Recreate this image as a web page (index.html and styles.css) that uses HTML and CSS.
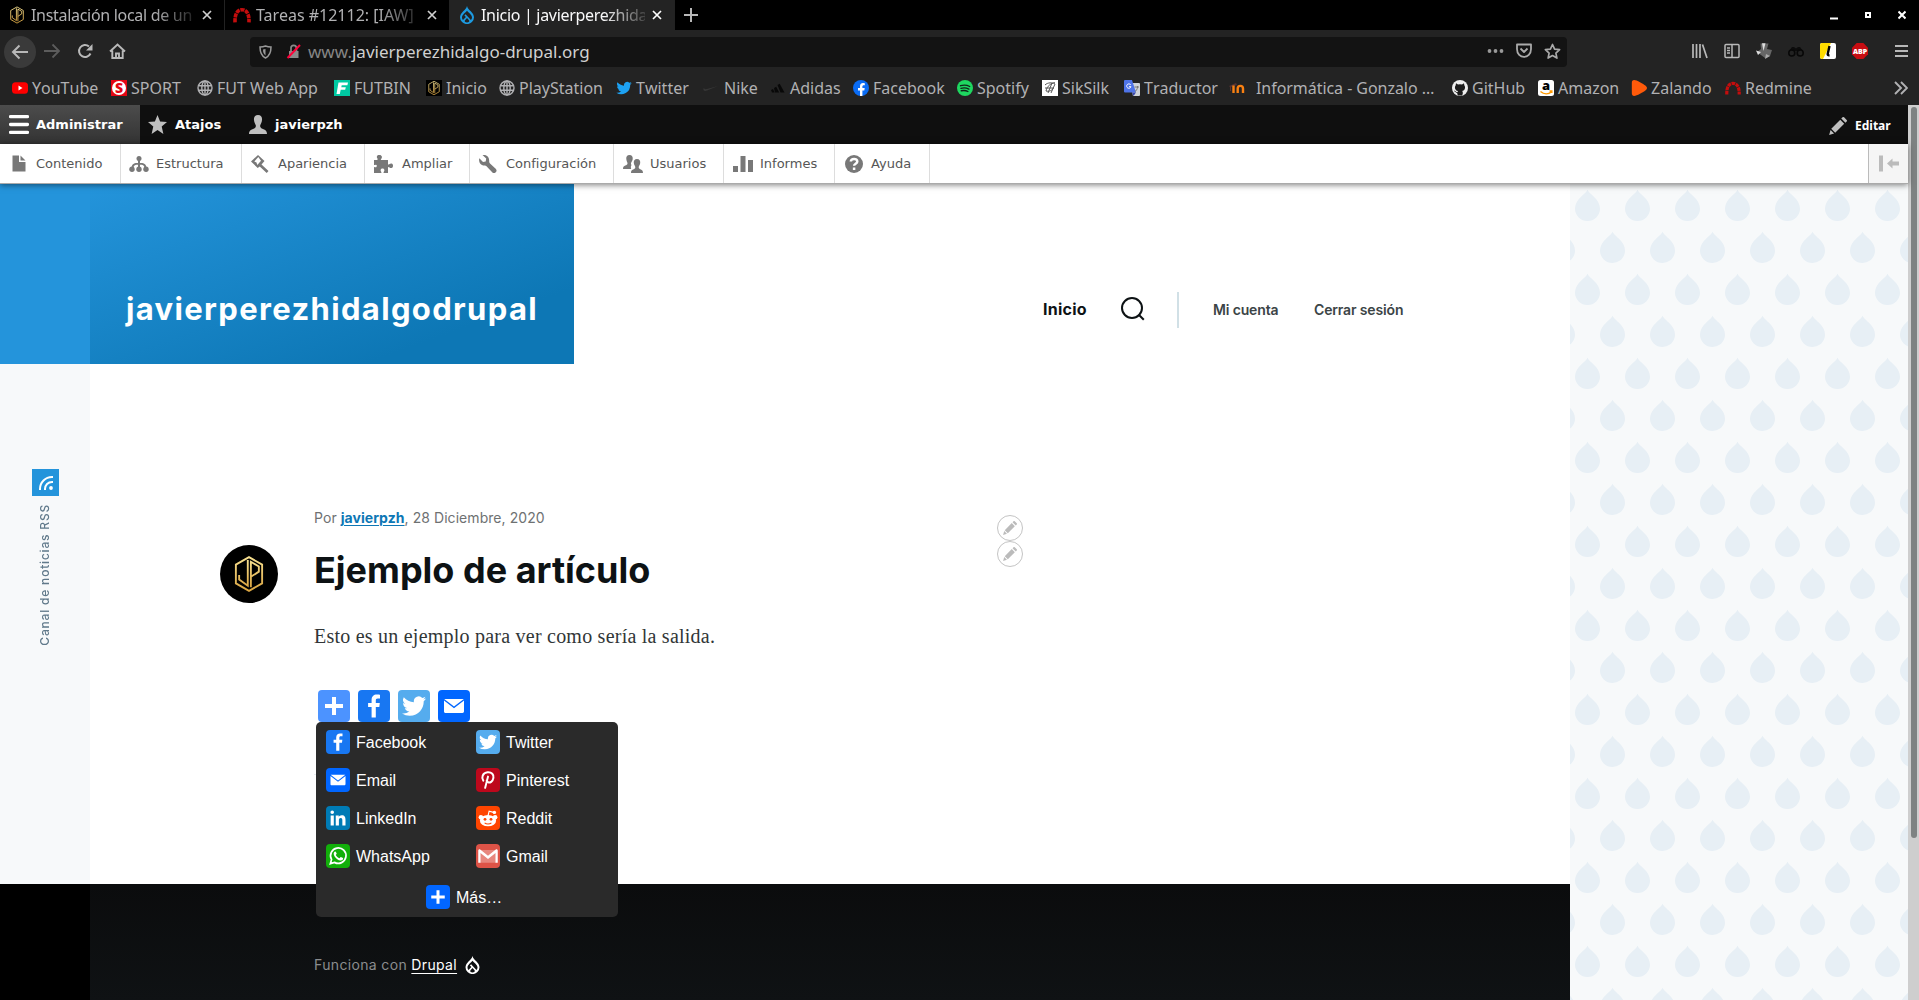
FILE: index.html
```html
<!DOCTYPE html>
<html lang="es">
<head>
<meta charset="utf-8">
<title>Inicio | javierperezhidalgodrupal</title>
<link rel="stylesheet" href="styles.css">
</head>
<body>
<svg class="defs" aria-hidden="true">
  <defs>
    <linearGradient id="gold" x1="0" y1="0" x2="0" y2="1"><stop offset="0" stop-color="#f8e190"/><stop offset="1" stop-color="#d9a441"/></linearGradient>
    <pattern id="drops" width="50" height="84" patternUnits="userSpaceOnUse">
      <g fill="#e7eff5">
        <path d="M17.500 5.500c1 4.500 12.500 9 12.500 19.300a12.500 12.200 0 0 1-25 0c0-10.300 11.500-14.800 12.500-19.300z"/>
        <path d="M42.500 47.500c1 4.500 12.500 9 12.500 19.300a12.500 12.200 0 0 1-25 0c0-10.300 11.500-14.800 12.500-19.300z"/>
        <path d="M-7.500 47.500c1 4.500 12.500 9 12.500 19.300a12.500 12.200 0 0 1-25 0c0-10.300 11.500-14.800 12.500-19.300z"/>
      </g>
    </pattern>
  </defs>
  <symbol id="jp" viewBox="0 0 32 40"><g fill="none" stroke="url(#gold)" stroke-width="2"><path d="M16 2l14 8v20l-14 8-14-8V10z"/><path d="M14.700 5v27.500L5.500 26v-5M18 34V7l8.500 5v5.500L18 23"/></g></symbol>
  <symbol id="redmine" viewBox="0 0 16 16"><path d="M1.800 14.500C1.500 7 4 3.300 8 3.300S14.500 7 14.200 14.500" fill="none" stroke="#c40d0d" stroke-width="3.200" stroke-dasharray="3.600 .7"/></symbol>
  <symbol id="drop" viewBox="0 0 14 18"><path fill="currentColor" fill-rule="evenodd" d="M7 0c.6 2.800 2.300 3.700 3.800 5.200C12.500 7 14 8.900 14 11.300A7 6.800 0 0 1 0 11.300C0 8.900 1.500 7 3.200 5.200 4.700 3.700 6.400 2.800 7 0zM7 4.700C5.500 6.700 2 8.700 2 11.400c0 1 .4 1.900 1 2.600l2.900-3.100-1.500-1.500 1.200-1.200L10.900 14c.7-.7 1.100-1.600 1.100-2.600 0-2.700-3.500-4.700-5-6.700zM7 12l-2 2.200c-.8 1 0 2.300 2 2.300s2.800-1.300 2-2.300z"/></symbol>
  <symbol id="globe" viewBox="0 0 16 16"><g fill="none" stroke="#b1b1b3" stroke-width="1.400"><circle cx="8" cy="8" r="7"/><ellipse cx="8" cy="8" rx="3.200" ry="7"/><path d="M8 1v14M1.500 5.700h13M1.500 10.300h13"/></g></symbol>
  <symbol id="close" viewBox="0 0 10 10"><path d="M1 1l8 8M9 1l-8 8" stroke="currentColor" stroke-width="1.700" fill="none"/></symbol>
  <symbol id="bird" viewBox="0 0 24 24"><path fill="currentColor" d="M23.600 4.900c-.8.400-1.700.6-2.700.8 1-.6 1.700-1.500 2.100-2.600-.9.500-1.900.9-3 1.100a4.800 4.800 0 0 0-8.100 4.300C8 8.300 4.500 6.400 2.100 3.500c-1.300 2.200-.6 5 1.500 6.300-.8 0-1.500-.2-2.100-.6 0 2.300 1.600 4.200 3.800 4.700-.7.200-1.400.2-2.100.1.600 1.900 2.400 3.200 4.400 3.300A9.500 9.500 0 0 1 .5 19.200a13.500 13.500 0 0 0 20.800-12c.9-.6 1.700-1.400 2.300-2.300z"/></symbol>
  <symbol id="pencil" viewBox="0 0 16 16"><path fill="currentColor" d="M10.900 1.400L12 .3a1 1 0 0 1 1.400 0l2.300 2.300a1 1 0 0 1 0 1.400l-1.100 1.100zM10 2.400L2 10.500 5.500 14l8-8zM1.400 11.500L.1 15.900l4.400-1.300z"/></symbol>
  <symbol id="s-plus" viewBox="0 0 32 32"><path fill="#fff" d="M14 7h4v18h-4zM7 14h18v4H7z"/></symbol>
  <symbol id="s-facebook" viewBox="0 0 32 32"><path fill="#fff" d="M17.800 27.500V17h3.500l.5-4h-4v-2.600c0-1.200.4-2 2-2h2.200V4.800c-.4-.1-1.700-.2-3.200-.2-3.100 0-5.200 1.900-5.200 5.400v3h-3.500v4h3.500v10.500z"/></symbol>
  <symbol id="s-twitter" viewBox="0 0 32 32"><path fill="#fff" d="M28 8.600a9.900 9.900 0 0 1-2.800.8 4.900 4.900 0 0 0 2.200-2.700c-1 .5-2 1-3.100 1.200a4.900 4.900 0 0 0-8.500 3.300c0 .4 0 .8.200 1.100-4.100-.2-7.700-2.200-10.200-5.100a4.900 4.900 0 0 0 1.500 6.500c-.8 0-1.500-.2-2.200-.6v.1c0 2.400 1.700 4.400 3.900 4.800a4.900 4.900 0 0 1-2.200.1 4.900 4.900 0 0 0 4.600 3.400A9.900 9.900 0 0 1 4 23.500 14 14 0 0 0 11.700 25.800c9.100 0 14-7.500 14-14v-.6A10 10 0 0 0 28 8.600z"/></symbol>
  <symbol id="s-email" viewBox="0 0 32 32"><path fill="#fff" d="M26 21.300V10.500l-10 7.700-10-7.700v11c0 .9.700 1.500 1.500 1.500h17c.9 0 1.500-.7 1.500-1.700z"/><path fill="#fff" d="M6.200 9h19.600L16 16.500z"/></symbol>
  <symbol id="s-pinterest" viewBox="0 0 32 32"><path fill="none" stroke="#fff" stroke-width="2.700" stroke-linecap="round" d="M9.700 16.800C7 13 8.500 6.500 15.500 5.800c5.500-.4 8.500 3 7.700 7.400-.8 5-4.700 7.200-7.200 5.700-1-.6-1.500-1.400-1.700-2.200M16 11.500l-3.800 15"/></symbol>
  <symbol id="s-linkedin" viewBox="0 0 32 32"><path fill="#fff" d="M6.200 12.600h4.200v13.500H6.200zM8.300 6a2.400 2.400 0 1 1 0 4.800 2.400 2.400 0 0 1 0-4.800M13 12.600h4v1.900c.6-1.100 2-2.200 4-2.200 4.200 0 5 2.800 5 6.400v7.400h-4.200v-6.500c0-1.600 0-3.600-2.100-3.600-2.200 0-2.500 1.700-2.500 3.400v6.700H13z"/></symbol>
  <symbol id="s-reddit" viewBox="0 0 32 32"><path fill="none" stroke="#fff" stroke-width="1.500" d="M16 13l1.500-6 6 1.500"/><g fill="#fff"><circle cx="24.500" cy="8.500" r="2.300"/><circle cx="6.500" cy="15" r="3"/><circle cx="25.500" cy="15" r="3"/><ellipse cx="16" cy="19.500" rx="10.800" ry="7.600"/></g><g fill="#ff4500"><circle cx="12" cy="17.800" r="1.900"/><circle cx="20" cy="17.800" r="1.900"/></g><path fill="none" stroke="#ff4500" stroke-width="1.400" d="M11.500 22.500c2.300 2 6.700 2 9 0"/></symbol>
  <symbol id="s-whatsapp" viewBox="0 0 32 32"><path fill="none" stroke="#fff" stroke-width="2.300" d="M5.800 26.200l1.600-5.600a10.300 10.300 0 1 1 3.900 3.900z"/><path fill="#fff" d="M12.500 10c-.5-.1-1 .1-1.500.8-1.200 1.500-1 3.500.5 5.700 2 3.200 4.700 5 8 5.600 1.500.2 3.300-1 3.400-3 0-.4-2.700-1.900-3.300-1.800-.6.100-1.200 1.800-1.700 1.700-1.800-.5-4-2.400-4.800-4.200.1-.5 1.200-1.300 1.100-2-.1-.5-1.200-2.800-1.700-2.800z"/></symbol>
  <symbol id="s-gmail" viewBox="0 0 32 32"><path fill="#fff" opacity=".3" d="M5 8h22v17H5z"/><path fill="#fff" d="M3 8.500C3 7.500 4 7 5.200 7L16 15.500 26.800 7C28 7 29 7.500 29 8.500V25h-3V12l-10 8L6 12v13H3z"/></symbol>
</svg>

<header class="browser">
  <div class="tabs">
    <div class="tab"><svg class="fav"><use href="#jp"/></svg><span class="tab-title">Instalación local de un</span><svg class="x"><use href="#close"/></svg></div>
    <div class="tab"><svg class="fav"><use href="#redmine"/></svg><span class="tab-title">Tareas #12112: [IAW]</span><svg class="x"><use href="#close"/></svg></div>
    <div class="tab active"><svg class="fav blue"><use href="#drop"/></svg><span class="tab-title">Inicio | javierperezhida</span><svg class="x"><use href="#close"/></svg></div>
    <svg class="plus" viewBox="0 0 16 16"><path d="M8 1v14M1 8h14" stroke="#b8b8b8" stroke-width="2"/></svg>
    <div class="win">
      <svg width="8" height="12"><path d="M0 9.500h8" stroke="#fff" stroke-width="2"/></svg>
      <svg width="8" height="12"><path d="M2 4h4v4H2z" fill="none" stroke="#fff" stroke-width="2"/></svg>
      <svg width="8" height="12"><path d="M.5 2.500l7 7M7.500 2.500l-7 7" stroke="#fff" stroke-width="2"/></svg>
    </div>
  </div>
  <div class="nav">
    <div class="nav-buttons">
      <span class="back"><svg width="18" height="16" viewBox="0 0 18 16"><path d="M17 8H2M8.500 1.500L2 8l6.500 6.500" fill="none" stroke="#b8b8b8" stroke-width="2"/></svg></span>
      <svg width="18" height="16" viewBox="0 0 18 16"><path d="M1 8h15M9.500 1.500L16 8l-6.500 6.500" fill="none" stroke="#5c5c5c" stroke-width="1.800"/></svg>
      <svg width="16" height="16" viewBox="0 0 16 16"><path d="M13.500 10.500A6 6 0 1 1 12 3.500" fill="none" stroke="#b8b8b8" stroke-width="2"/><path d="M15.500 1v6.500H9z" fill="#b8b8b8"/></svg>
      <svg width="17" height="16" viewBox="0 0 17 16"><path d="M1 8.500l7.500-7 7.500 7M3.300 7.500V15h10.400V7.500M7 15v-4.500h3V15" fill="none" stroke="#b8b8b8" stroke-width="1.900"/></svg>
    </div>
    <div class="url">
      <svg width="13" height="14" viewBox="0 0 13 14"><path d="M6.500 1c2 .8 3.500 1 5.500 1 0 6-1.500 9-5.500 11C2.500 11 1 8 1 2c2 0 3.500-.2 5.500-1z" fill="none" stroke="#999" stroke-width="1.500"/><path d="M6.500 4v6.500C4.700 9 4 7.500 4 4.500z" fill="#999"/></svg>
      <svg class="lock" width="15" height="15" viewBox="0 0 15 15"><path d="M3 7h9.500v7H3z" fill="#8a8a8a"/><path d="M5 7V4a2.700 2.700 0 0 1 5.400 0v3" fill="none" stroke="#8a8a8a" stroke-width="1.700"/><path d="M1.500 14L14 1" stroke="#ff0039" stroke-width="2"/></svg>
      <span class="address"><span class="dim">www.</span>javierperezhidalgo-drupal.org</span>
      <svg width="17" height="14" viewBox="0 0 17 14"><g fill="#999"><circle cx="2.500" cy="7" r="1.900"/><circle cx="8.500" cy="7" r="1.900"/><circle cx="14.500" cy="7" r="1.900"/></g></svg>
      <svg width="16" height="15" viewBox="0 0 16 15"><path d="M1 1.500h14V6c0 10.500-14 10.500-14 0zM4.500 5.500L8 9l3.500-3.500" fill="none" stroke="#aaa" stroke-width="1.800" stroke-linejoin="round"/></svg>
      <svg width="17" height="16" viewBox="0 0 17 16"><path d="M8.500 1.500l2.100 4.600 5 .6-3.700 3.400 1 5-4.400-2.500-4.400 2.500 1-5L1.400 6.700l5-.6z" fill="none" stroke="#aaa" stroke-width="1.700" stroke-linejoin="round"/></svg>
    </div>
    <div class="tools">
      <svg viewBox="0 0 16 16"><path d="M1 1v14M4.500 1v14M8 1v14M10.500 1.500l4.500 13.500" stroke="#b8b8b8" stroke-width="1.700"/></svg>
      <svg viewBox="0 0 16 16"><path d="M1 2.500q0-1 1-1h12q1 0 1 1v11q0 1-1 1H2q-1 0-1-1zM8 2v12M3 5h3M3 7.500h3M3 10h3" fill="none" stroke="#b8b8b8" stroke-width="1.500"/></svg>
      <svg viewBox="0 0 16 16"><path d="M5 6L4.500.5h8L11 6l5 1-2 6-5 2-4-3-4-3z" fill="#666"/><path d="M7.500 8L6 .3h3.500zM0 7.500l5 1.500-3 3z" fill="#ddd"/><path d="M9 16l1-5 4 2z" fill="#aaa"/></svg>
      <svg viewBox="0 0 16 16"><path d="M1 8l3-4h2l2 1.500L10 4h2l3 4" fill="#0c0c0c"/><circle cx="3.800" cy="10" r="3" fill="#222" stroke="#080808" stroke-width="1.600"/><circle cx="12.200" cy="10" r="3" fill="#222" stroke="#080808" stroke-width="1.600"/></svg>
      <svg viewBox="0 0 16 16"><rect width="16" height="16" rx="2" fill="#fff"/><path d="M2 0h9L3 16H2q-2 0-2-2V2q0-2 2-2z" fill="#ffdc00"/><path d="M9.500 3L7.700 11q-.3 1.500 1.800 1.200" fill="none" stroke="#000" stroke-width="2.400"/></svg>
      <svg viewBox="0 0 16 16"><path d="M4.700 0h6.600L16 4.700v6.600L11.300 16H4.700L0 11.300V4.700z" fill="#c70d12"/><text class="fav-text white" x="8" y="10.700" font-size="7">ABP</text></svg>
      <svg class="burger" viewBox="0 0 16 16"><path d="M1 3h13M1 8h13M1 13h13" stroke="#b8b8b8" stroke-width="2"/></svg>
    </div>
  </div>
  <nav class="bookmarks">
    <a><svg viewBox="0 0 16 16"><rect y="2.300" width="16" height="11.400" rx="3.500" fill="#f00"/><path d="M6.500 5.500L10.500 8l-4 2.500z" fill="#fff"/></svg>YouTube</a>
    <a><svg viewBox="0 0 16 16"><rect width="16" height="16" fill="#e30613"/><circle cx="8" cy="8" r="7" fill="#fff"/><text x="8" y="13" class="fav-text red" font-size="14">S</text></svg>SPORT</a>
    <a><svg><use href="#globe"/></svg>FUT Web App</a>
    <a><svg viewBox="0 0 16 16"><rect width="16" height="16" fill="#00c9a2"/><path d="M4.500 2.500H14l-.6 2.800H7.700l-.4 1.900h4.500l-.6 2.600H6.700L5.800 14H2.500z" fill="#fff"/></svg>FUTBIN</a>
    <a><svg viewBox="0 0 16 16"><rect width="16" height="16"/><use href="#jp" x="1" y=".5" width="14" height="15"/></svg>Inicio</a>
    <a><svg><use href="#globe"/></svg>PlayStation</a>
    <a><svg class="tw"><use href="#bird"/></svg>Twitter</a>
    <a class="wide"><svg viewBox="0 0 16 16"><path d="M1 7.500C-.5 10 1 11.800 4 10.500L15 6 4 9C2 9.400.8 9 1 7.500z" fill="#363636"/></svg>Nike</a>
    <a><svg viewBox="0 0 16 16"><path d="M1 10l2-1 1.600 3.500H2zM4 8l2.200-1.200 3 5.700H5zM7.500 5l2.200-1.300 4.800 8.800h-4z" fill="#080808"/></svg>Adidas</a>
    <a><svg viewBox="0 0 16 16"><circle cx="8" cy="8" r="8" fill="#0a6cf5"/><path d="M7 16v-5.500H5V8h2V6.300C7 4 8.300 3 10 3l1.800.2v2h-1C9.700 5.200 9.400 5.800 9.400 6.500V8h2.300l-.4 2.500H9.400V16z" fill="#fff"/></svg>Facebook</a>
    <a><svg viewBox="0 0 16 16"><circle cx="8" cy="8" r="8" fill="#1ed760"/><path d="M3.500 5.700c3-.9 6.500-.7 9.200.8M4 8.300c2.700-.8 5.500-.5 7.900.8M4.300 10.800c2.300-.6 4.600-.4 6.600.7" fill="none" stroke="#10251a" stroke-width="1.400" stroke-linecap="round"/></svg>Spotify</a>
    <a><svg viewBox="0 0 16 16"><rect width="16" height="16" fill="#fff"/><path d="M3 5c3-3 7-2 10-2-4 0-8 3-9 8 3 1 7-1 7-3M10 3L6 13M13 4L9 13M3 8h9" fill="none" stroke="#555" stroke-width="1"/></svg>SikSilk</a>
    <a><svg viewBox="0 0 16 16"><path d="M6 3h9q1 0 1 1v11q0 1-1 1H9z" fill="#cfd3d8"/><path d="M1 0h7l4 12.500H1q-1 0-1-1V1q0-1 1-1z" fill="#4f74e8"/><path d="M8 12.500h4L9.500 16z" fill="#3949ab"/><path d="M6.800 5a2.200 2.200 0 1 0 .2 1.700H5" stroke="#fff" fill="none"/><path d="M10.500 7H15M13.500 6v1c0 2-1.500 4-2.500 4.500" stroke="#777" fill="none"/></svg>Traductor</a>
    <a class="wider"><svg viewBox="0 0 16 16"><path d="M0 6l7-3 1 2-6 2v4H1V7z" fill="#533"/><path d="M4.500 5.500V13M8.700 13V8.500C8.700 5 14 5 14 8.500V13" stroke="#f98012" stroke-width="2.400" fill="none"/></svg>Informática - Gonzalo …</a>
    <a><svg viewBox="0 0 16 16"><circle cx="8" cy="8" r="8" fill="#eee"/><path d="M5.800 14.500v-2C3.500 13 3.500 11 2.500 11M10.200 14.500v-3" fill="none" stroke="#1b1b1b"/><path d="M4 3.300l2 1.100q2-.5 4 0l2-1.100.3 2c2 3-.3 5.700-2.100 5.700v4.500H5.800V11c-2-.2-4-2.800-2.100-5.700z" fill="#1b1b1b"/></svg>GitHub</a>
    <a><svg viewBox="0 0 16 16"><rect width="16" height="16" rx="2.500" fill="#fff"/><text class="fav-text" x="8" y="9.500" font-size="13">a</text><path d="M2.500 11.500c3.500 3 8 2.800 11 .3M11.500 11h2.300v2" stroke="#f90" stroke-width="1.500" fill="none"/></svg>Amazon</a>
    <a><svg viewBox="0 0 16 16"><path d="M.8 3C.8-1 4-.5 9 2.200S16 6.500 16 8s-2 3-7 5.800S.8 17 .8 13z" fill="#ff5a0a"/></svg>Zalando</a>
    <a><svg><use href="#redmine"/></svg>Redmine</a>
    <svg class="more" viewBox="0 0 14 14"><path d="M1 1l6 6-6 6M7 1l6 6-6 6" fill="none" stroke="#b1b1b3" stroke-width="1.900"/></svg>
  </nav>
</header>

<div class="viewport">
  <div class="page">
    <div class="admin-bar">
      <a class="current"><svg width="20" height="19" viewBox="0 0 20 19"><path d="M1.500 1.700h17M1.500 9.500h17M1.500 17.300h17" stroke="#fff" stroke-width="3.300" stroke-linecap="round"/></svg>Administrar</a>
      <a><svg width="19" height="19" viewBox="0 0 19 19"><path d="M9.500 0l2.600 6.600 6.900.5-5.300 4.500L15.400 19l-5.900-4-5.900 4 1.700-7.400L0 7.100l6.900-.5z" fill="#bfbfbf"/></svg>Atajos</a>
      <a><svg width="18" height="19" viewBox="0 0 18 19"><path d="M9 0c3.200 0 4.300 2.200 4 5-.2 2.500-1.300 4-1.700 5-.5 1.500.2 3 2 3.700 2.200.8 4.700 1.500 4.700 5.300H0c0-3.800 2.500-4.500 4.700-5.300 1.800-.7 2.500-2.200 2-3.700-.4-1-1.500-2.500-1.700-5-.3-2.800.8-5 4-5z" fill="#bfbfbf"/></svg>javierpzh</a>
      <a class="edit"><svg width="18" height="18"><use href="#pencil"/></svg><span>Editar</span></a>
    </div>
    <div class="admin-tray">
      <a><svg viewBox="0 0 16 16"><path d="M1.500 0H8v6.500h6.500V16h-13zM9.500 0l5 5h-5z"/></svg>Contenido</a>
      <a><svg class="w20" viewBox="0 0 20 16"><circle cx="10" cy="2.500" r="2.500"/><path d="M9 3h2v4c3 0 6 0 6.500 5h-2c-.3-3-1.800-3.300-4.500-3.300V12H9V8.700C6.300 8.700 4.800 9 4.500 12h-2C3 7 6 7 9 7z"/><circle cx="3" cy="13.300" r="2.700"/><circle cx="10" cy="13.300" r="2.700"/><circle cx="17" cy="13.300" r="2.700"/></svg>Estructura</a>
      <a><svg class="w20" viewBox="0 0 20 18"><path fill-rule="evenodd" d="M8 0l6.500 6-3 3.500 7 6.500-1.800 2-7-6.500-2 1.500L1 6.500zM8.300 2L4.300 6.500l2.200 1 .8 2.500 3.700-4.200z"/></svg>Apariencia</a>
      <a><svg class="w20" viewBox="0 0 20 18"><path d="M4.500 5V3.500A2.300 2.300 0 0 1 8 .5c2 1.500.3 3-.3 4.500H15v4.500c1.500 0 2-1.300 3.500-1 2 .5 2 4 0 4.500-1.500.3-2-1-3.500-1V18h-4.500c0-1.500 1.200-1.800.8-3.300-.4-1.700-3.200-1.700-3.600 0-.4 1.500.8 1.800.8 3.300H1v-6c1.500 0 2 .8 2.500-.2.600-1.200.3-2-.6-2.100-.8-.1-1 .5-1.900.3V5z"/></svg>Ampliar</a>
      <a><svg class="w20" viewBox="0 0 18 18"><path d="M3.500 0l3.700 3.500-.5 3L4 7 .3 3.300C-.5 6.500 1 10.500 5.500 10.500c1 0 2 .5 2.700 1.500l5 5.300a2.400 2.400 0 0 0 3.500-3.500L11 8.500c-.8-.8-.8-1.500-.8-2.700C10.300 1.500 6.800-.8 3.500 0z"/></svg>Configuración</a>
      <a><svg class="w20" viewBox="0 0 20 18"><path d="M6.500 0c2.500 0 3.500 1.800 3.200 4-.3 3-2.700 3.500-1.200 6-1.200 1.500-.3 3.500-.3 4H0c0-4.500 4.500-3 4.500-5.500C4.500 7 3.500 6.500 3.300 4 3 1.800 4 0 6.500 0z"/><path d="M14 4c2.500 0 3.500 1.800 3.200 4-.2 2.300-1.700 3-1.500 4.500.3 2.500 4.300 1 4.300 5.500H8c0-4.500 4-3 4.300-5.500.2-1.500-1.300-2.200-1.500-4.500-.3-2.200.7-4 3.200-4z"/></svg>Usuarios</a>
      <a><svg class="w20" viewBox="0 0 20 16"><path d="M0 10h5v6H0zM7.500 0h5v16h-5zM15 4h5v12h-5z"/></svg>Informes</a>
      <a><svg class="w20" viewBox="0 0 18 18"><circle cx="9" cy="9" r="9"/><path d="M5.800 6.500C6 3 12.300 3 12.300 6.500c0 2.200-3.200 2.200-3.200 4.300M9.100 12.500V15" fill="none" stroke="#fff" stroke-width="2.500"/></svg>Ayuda</a>
      <span class="tray-toggle"><svg width="20" height="16" viewBox="0 0 20 16"><path d="M0 0h4v16H0zM8 8l5.500-5v3H20v4h-6.500v3z" fill="#bbb"/></svg></span>
    </div>

    <div class="site">
      <aside class="rail">
        <div class="rail-blue"></div>
        <div class="rss">
          <span class="rss-icon"><svg width="14" height="14" viewBox="0 0 14 14"><g fill="none" stroke="#fff" stroke-width="2"><path d="M1 14V13A12 12 0 0 1 13 1h1M6 14v-1a7 7 0 0 1 7-7h1"/></g><circle cx="12" cy="12" r="1.900" fill="#fff"/></svg></span>
          <span class="rss-label">Canal de noticias RSS</span>
        </div>
        <div class="rail-black"></div>
      </aside>
      <main class="content">
        <div class="masthead">
          <div class="brand">javierperezhidalgodrupal</div>
          <nav class="menu">
            <a class="home">Inicio</a>
            <svg class="search" width="24" height="24" viewBox="0 0 24 24"><g fill="none" stroke="#0d1214" stroke-width="2"><circle cx="11" cy="11" r="10"/><path d="M17.500 17.500l5.300 5.300"/></g></svg>
            <span class="bar"></span>
            <a class="account">Mi cuenta</a>
            <a class="logout">Cerrar sesión</a>
          </nav>
        </div>
        <article class="post">
          <p class="meta">Por <a>javierpzh</a>, 28 Diciembre, 2020</p>
          <div class="heading">
            <span class="avatar"><svg width="30" height="38"><use href="#jp"/></svg></span>
            <h1>Ejemplo de artículo</h1>
          </div>
          <p class="body">Esto es un ejemplo para ver como sería la salida.</p>
          <div class="share">
            <span class="chip lightblue"><svg><use href="#s-plus"/></svg></span>
            <span class="chip fb"><svg><use href="#s-facebook"/></svg></span>
            <span class="chip twt"><svg><use href="#s-twitter"/></svg></span>
            <span class="chip mail"><svg><use href="#s-email"/></svg></span>
            <div class="share-menu">
              <a><span class="chip fb"><svg><use href="#s-facebook"/></svg></span><span class="label">Facebook</span></a>
              <a><span class="chip twt"><svg><use href="#s-twitter"/></svg></span><span class="label">Twitter</span></a>
              <a><span class="chip mail"><svg><use href="#s-email"/></svg></span><span class="label">Email</span></a>
              <a><span class="chip pin"><svg><use href="#s-pinterest"/></svg></span><span class="label">Pinterest</span></a>
              <a><span class="chip lin"><svg><use href="#s-linkedin"/></svg></span><span class="label">LinkedIn</span></a>
              <a><span class="chip red"><svg><use href="#s-reddit"/></svg></span><span class="label">Reddit</span></a>
              <a><span class="chip wha"><svg><use href="#s-whatsapp"/></svg></span><span class="label">WhatsApp</span></a>
              <a><span class="chip gma"><svg><use href="#s-gmail"/></svg></span><span class="label">Gmail</span></a>
              <a class="all"><span class="chip mail"><svg><use href="#s-plus"/></svg></span><span class="label">Más…</span></a>
            </div>
          </div>
          <div class="edit-badges">
            <span><svg><use href="#pencil"/></svg></span>
            <span><svg><use href="#pencil"/></svg></span>
          </div>
        </article>
        <footer class="footer"><span class="powered">Funciona con <a>Drupal</a></span><svg width="15" height="18"><use href="#drop"/></svg></footer>
      </main>
      <svg class="pattern"><rect width="100%" height="100%" fill="url(#drops)"/></svg>
    </div>
  </div>
  <div class="scrollbar"><span></span></div>
</div>
</body>
</html>
```
FILE: styles.css
```css
* { box-sizing: border-box; }
body { margin: 0; width: 1919px; height: 1000px; overflow: hidden; background: #fff; font-family: "Noto Sans", sans-serif; }
p, h1 { margin: 0; }
svg { display: block; flex: none; }
.defs { position: absolute; width: 0; height: 0; }

/* Browser window */
.browser { height: 105px; background: #232323; color: #b1b1b3; font-size: 16px; }
.tabs { display: flex; align-items: center; height: 30px; background: #000; }
.tab { display: flex; align-items: center; width: 225px; height: 30px; padding-left: 8px; border-right: 1px solid #222; }
.tab.active { background: #232323; color: #f9f9fa; }
.tab .fav { width: 18px; height: 18px; margin-right: 5px; }
.tab .blue { color: #1d9ae0; }
.tab-title { width: 164px; white-space: nowrap; line-height: 24px; letter-spacing: -.3px; -webkit-mask-image: linear-gradient(90deg, #000 75%, rgba(0,0,0,.15)); mask-image: linear-gradient(90deg, #000 75%, rgba(0,0,0,.15)); }
.tab:nth-child(2) .tab-title { letter-spacing: 0; }
.x { width: 10px; height: 10px; margin-left: 7px; color: #d0d0d0; }
.tab.active .x { color: #fff; }
.plus { width: 16px; height: 16px; margin-left: 8px; }
.win { display: flex; gap: 26px; margin-left: auto; margin-right: 13px; }

.nav { display: flex; align-items: center; height: 43px; }
.nav-buttons { display: flex; align-items: center; width: 250px; padding-left: 4px; }
.back { display: flex; align-items: center; justify-content: center; width: 32px; height: 32px; margin-right: 7px; border-radius: 50%; background: #3a3a3a; }
.nav-buttons > svg { margin: -1px 16px 0 0; }
.url { display: flex; align-items: center; width: 1317px; height: 30px; padding: 0 6px 0 9px; border-radius: 4px; background: #131313; }
.url .lock { margin: 0 7px 0 14px; }
.address { flex: 1; font-size: 17px; color: #d0d0d0; }
.address .dim { color: #858585; }
.address ~ svg { margin: -2px 0 0 12px; }
.tools { display: flex; align-items: center; gap: 16px; margin: -2px 0 0 125px; }
.tools svg { width: 16px; height: 16px; }
.tools .burger { margin-left: 10px; }
.fav-text { font-family: "Open Sans", sans-serif; font-weight: 800; text-anchor: middle; }
.fav-text.white { fill: #fff; }
.fav-text.red { fill: #e30613; }

.bookmarks { display: grid; grid-template-columns: 99px 86px 137px 92px 73px 117px 87px 67px 83px 104px 85px 82px 105px 223px 86px 93px 94px 169px 14px; align-items: center; height: 30px; padding-left: 12px; font-kerning: none; }
.bookmarks a { display: flex; align-items: center; gap: 4px; white-space: nowrap; }
.bookmarks a > svg { width: 16px; height: 16px; }
.bookmarks .wide { gap: 5px; }
.bookmarks .wider { gap: 11px; letter-spacing: -.05px; }
.bookmarks .tw { color: #1da1f2; }
.bookmarks .more { width: 14px; height: 14px; }

/* Drupal administration toolbar */
.viewport { display: flex; height: 895px; }
.page { width: 1908px; }
.scrollbar { width: 11px; padding: 2px 2px 0 3px; background: #cecece; }
.scrollbar span { display: block; height: 731px; border-radius: 3px; background: #7e8282; }
.admin-bar { display: flex; height: 39px; background: #0f0f0f; color: #fff; font: bold 13px "DejaVu Sans", sans-serif; }
.admin-bar a { display: flex; align-items: center; gap: 7px; padding-left: 9px; }
.admin-bar .current { width: 140px; background: linear-gradient(#4c4c4c, #333); }
.admin-bar a:nth-child(2) { width: 101px; padding-left: 8px; gap: 8px; }
.admin-bar a:nth-child(3) { padding-left: 8px; gap: 8px; }
.admin-bar .edit { gap: 8px; margin-left: auto; width: 79px; padding: 2px 0 0; color: #fff; font: bold 12px "Noto Sans", sans-serif; }
.admin-bar .edit svg { color: #bfbfbf; }
.admin-tray { display: grid; grid-template-columns: 121px 121px 123px 105px 144px 110px 111px 95px 1fr 40px; height: 40px; position: relative; border-bottom: 1px solid #aaa; box-shadow: 0 1px 6px rgba(0,0,0,.5); background: #fff; color: #565656; font: 13px "DejaVu Sans", sans-serif; }
.admin-tray a { display: flex; align-items: center; gap: 7px; padding-left: 8px; border-right: 1px solid #ddd; }
.admin-tray a:first-child { gap: 9px; padding-left: 11px; }
.admin-tray a:nth-child(5) { padding-left: 8px; gap: 8px; }
.admin-tray a:nth-child(4) { gap: 9px; }
.admin-tray a:nth-child(3) { gap: 8px; }
.admin-tray a:nth-child(6) { gap: 7px; padding-left: 9px; }
.admin-tray a:nth-child(7) { gap: 7px; padding-left: 9px; }
.admin-tray a:nth-child(8) { gap: 7px; padding-left: 9px; }
.admin-tray svg { fill: #787878; width: 16px; height: 17px; }
.admin-tray .w20 { width: 20px; height: 18px; }
.tray-toggle { grid-column: 10; display: flex; align-items: center; justify-content: center; border-left: 1px solid #bbb; background: #f5f5f5; }
.tray-toggle svg { width: 20px; }

/* Site */
.site { display: grid; grid-template-columns: 90px 1480px 338px; height: 816px; font-family: Inter, sans-serif; }
.rail { display: flex; flex-direction: column; background: #f7f9fa; }
.rail-blue { height: 180px; background: #2494db; }
.rss { flex: 1; display: flex; flex-direction: column; align-items: center; padding-top: 105px; }
.rss-icon { display: flex; align-items: center; justify-content: center; width: 27px; height: 27px; margin: 0 0 8px 1px; background: #2494db; }
.rss-label { writing-mode: vertical-rl; transform: rotate(180deg); font-size: 12px; font-weight: 500; letter-spacing: .8px; line-height: 20px; white-space: nowrap; color: #60798a; }
.rail-black { height: 116px; background: #000; }
.content { display: flex; flex-direction: column; }
.masthead { display: flex; height: 180px; }
.brand { width: 484px; padding: 105px 0 0 36px; background: linear-gradient(160deg, #2494db 0%, #0d77b5 78.660%); color: #fff; font-size: 31px; font-weight: 700; line-height: 40px; letter-spacing: 1.35px; }
.menu { display: flex; align-items: center; height: 36px; margin: 108px 0 0 469px; color: #0d1214; white-space: nowrap; }
.home { width: 78px; margin-top: -2px; font-size: 16px; font-weight: 700; letter-spacing: .25px; }
.search { margin-right: 32px; margin-top: -3px; }
.bar { width: 2px; height: 36px; margin-right: 34px; background: #d1e0e6; }
.account, .logout { margin-top: -2px; font-size: 14px; font-weight: 600; letter-spacing: -.15px; color: #3b4446; }
.account { width: 101px; }
.post { flex: 1; position: relative; padding: 144px 0 0 224px; }
.meta { font-size: 14px; line-height: 20px; letter-spacing: .06px; color: #6e7172; }
.meta a { color: #0d77b5; font-weight: 700; text-decoration: underline; text-underline-offset: 2px; }
.heading { display: flex; align-items: center; height: 58px; margin: 17px 0 0 -94px; }
.avatar { display: flex; align-items: center; justify-content: center; width: 58px; height: 58px; margin-right: 36px; border-radius: 50%; background: #000; }
h1 { font-size: 36px; line-height: 54px; margin-top: -8px; font-weight: 700; letter-spacing: 0; color: #0d1214; }
.body { margin: 19px 0 0; font: 20px/28px "Liberation Serif", serif; letter-spacing: .23px; color: #313637; }
.share { position: relative; display: flex; gap: 8px; width: 300px; height: 85px; margin-top: 40px; padding-left: 4px; border-bottom: 1px solid #e7edf1; }
.chip { width: 32px; height: 32px; border-radius: 4px; flex: none; }
.chip svg { width: 100%; height: 100%; }
.lightblue { background: #4c93ff; }
.fb { background: #1877f2; }
.twt { background: #55acee; }
.mail { background: #0166ff; }
.pin { background: #bd081c; }
.lin { background: #007bb5; }
.red { background: #ff4500; }
.wha { background: #12af0a; }
.gma { background: #dd5347; }
.share-menu { position: absolute; left: 2px; top: 32px; display: grid; grid-template-columns: 150px 1fr; grid-template-rows: repeat(4, 38px) 41px; width: 302px; height: 195px; padding: 1px 0 0 10px; border-radius: 5px; background: #2a2a2a; font: 16px "Liberation Sans", sans-serif; color: #fff; z-index: 2; }
.share-menu a { display: flex; align-items: center; gap: 6px; }
.share-menu .label { padding-top: 2px; }
.share-menu .chip { width: 24px; height: 24px; }
.share-menu .all { grid-column: 1 / 3; padding-left: 100px; padding-top: 3px; }
.edit-badges { position: absolute; left: 907px; top: 151px; display: flex; flex-direction: column; }
.edit-badges span { display: flex; align-items: center; justify-content: center; width: 26px; height: 26px; border: 1px solid #c4c4c4; border-radius: 50%; color: #bbb; }
.edit-badges svg { width: 14px; height: 14px; }
.footer { display: flex; align-items: center; gap: 8px; height: 116px; padding: 46px 0 0 224px; background: linear-gradient(#0b0c0d, #0f1214); color: #8b8d8e; font-size: 14px; letter-spacing: .35px; }
.footer a { color: #fff; text-decoration: underline; text-underline-offset: 3px; }
.footer svg { color: #fff; }
.powered { margin-top: -1px; }
.pattern { width: 338px; height: 816px; background: #f7f9fa; }
```
